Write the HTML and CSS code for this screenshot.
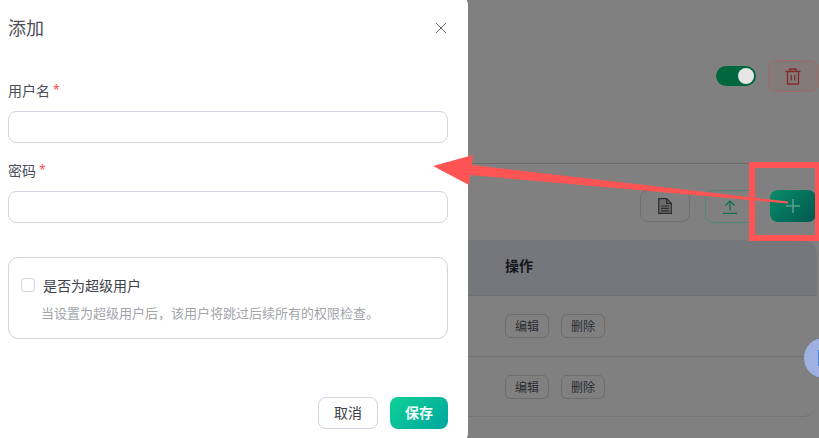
FILE: index.html
```html
<!DOCTYPE html>
<html lang="zh-CN">
<head>
    <meta charset="UTF-8">
    <meta name="viewport" content="width=device-width, initial-scale=1.0">
    <title>添加用户</title>
    <link rel="stylesheet" href="styles.css">
</head>
<body>
    <div class="page">
        <!-- Dimmed page behind the drawer -->
        <main class="content">
            <div class="top-row">
                <span class="toggle"><span class="toggle-knob"></span></span>
                <button class="icon-button delete-all">
                    <svg width="16" height="17" viewBox="0 0 16 17" fill="none" stroke="#852a2a" stroke-width="1.3">
                        <path d="M0.500 3.500h15M5 3.500V1h6v2.500M2.500 3.500V16h11V3.500M6.300 7v5.500M9.700 7v5.500"/>
                    </svg>
                </button>
            </div>

            <div class="search-line"></div>

            <div class="action-row">
                <button class="icon-button doc-button">
                    <svg width="14" height="16" viewBox="0 0 14 16" fill="#6a6a6a" stroke="#2e2e2e" stroke-width="1.200">
                        <path d="M0.700 0.700h8l4.600 4.600v10H0.700z"/>
                        <path d="M8.700 0.700v4.600h4.600M3 8h8M3 10.300h8M3 12.800h8" fill="none"/>
                    </svg>
                </button>
                <button class="icon-button upload-button">
                    <svg width="14" height="14" viewBox="0 0 14 14" fill="none" stroke="#0b6e52" stroke-width="1.200">
                        <path d="M7 10.500V1M2.500 5.500L7 1l4.500 4.500M0 13.300h14"/>
                    </svg>
                </button>
                <button class="icon-button add-button">
                    <svg width="14" height="14" viewBox="0 0 14 14" fill="none" stroke="#5f9f8d" stroke-width="1.500">
                        <path d="M7 0v14M0 7h14"/>
                    </svg>
                </button>
            </div>

            <div class="table">
                <div class="table-head">操作</div>
                <div class="table-row">
                    <button class="row-button">编辑</button>
                    <button class="row-button">删除</button>
                </div>
                <div class="table-row">
                    <button class="row-button">编辑</button>
                    <button class="row-button">删除</button>
                </div>
            </div>
        </main>

        <div class="help-bubble"><span class="help-dot"></span></div>

        <!-- Drawer -->
        <aside class="drawer">
            <div class="drawer-header">
                <h2 class="drawer-title">添加</h2>
                <svg class="close-icon" width="12" height="12" viewBox="0 0 12 12" fill="none" stroke="#666a70" stroke-width="1">
                    <path d="M1 1l10 10M11 1L1 11"/>
                </svg>
            </div>

            <div class="field">
                <label class="field-label">用户名 <span class="required">*</span></label>
                <input class="text-input" type="text">
            </div>

            <div class="field">
                <label class="field-label">密码 <span class="required">*</span></label>
                <input class="text-input" type="password">
            </div>

            <div class="super-card">
                <div class="check-row">
                    <span class="checkbox"></span>
                    <span class="check-label">是否为超级用户</span>
                </div>
                <p class="check-help">当设置为超级用户后&#xFF0C;该用户将跳过后续所有的权限检查。</p>
            </div>

            <div class="drawer-footer">
                <button class="btn btn-cancel">取消</button>
                <button class="btn btn-save">保存</button>
            </div>
        </aside>

        <!-- Red annotation drawn on top of the screenshot -->
        <svg class="annotation" width="819" height="438" viewBox="0 0 819 438">
            <rect x="752" y="165" width="66" height="73" fill="none" stroke="#ff5454" stroke-width="6"/>
            <path d="M433 166L473 155L472 165L788 201.500V203.500L470 175L469 185Z" fill="#ff5454"/>
        </svg>
    </div>
</body>
</html>
```

FILE: styles.css
```css
* {
    box-sizing: border-box;
}

html, body {
    margin: 0;
    height: 100%;
}

body {
    font-family: "Noto Sans CJK SC", "Liberation Sans", sans-serif;
    overflow: hidden;
}

button {
    font-family: inherit;
    padding: 0;
}

.page {
    position: relative;
    width: 819px;
    height: 438px;
    overflow: hidden;
    background-color: #808080;
}

/* Background page */
.content {
    display: flex;
    flex-direction: column;
    margin-left: 468px;
    padding-top: 60px;
}

.top-row {
    display: flex;
    align-items: center;
    justify-content: flex-end;
    gap: 12px;
    height: 32px;
    padding-right: 1px;
}

.toggle {
    display: flex;
    align-items: center;
    justify-content: flex-end;
    width: 40px;
    height: 20px;
    padding-right: 2px;
    background-color: #02663f;
    border-radius: 10px;
}

.toggle-knob {
    width: 16px;
    height: 16px;
    background-color: #e6e6e6;
    border-radius: 50%;
}

.icon-button {
    display: flex;
    align-items: center;
    justify-content: center;
    height: 32px;
    background: transparent;
    border: 1px solid #6f6f6f;
    border-radius: 8px;
}

.delete-all {
    width: 50px;
    background-color: #857a7a;
    border-color: #a06a6a;
}

.search-line {
    height: 1px;
    margin-top: 71px;
    margin-right: 60px;
    background-color: #6c6c6c;
}

.action-row {
    display: flex;
    align-items: flex-start;
    justify-content: flex-end;
    gap: 15px;
    height: 33px;
    margin-top: 26px;
    padding-right: 3px;
}

.doc-button {
    width: 50px;
}

.upload-button {
    width: 50px;
    height: 33px;
    border-color: #4f8a78;
}

.add-button {
    width: 46px;
    background: linear-gradient(135deg, #078d69, #01574f);
    border: none;
}

.table {
    height: 177px;
    margin-top: 17px;
    margin-right: 2px;
    border-bottom: 1px solid #747474;
    border-radius: 0 14px 14px 0;
}

.table-head {
    display: flex;
    align-items: center;
    height: 56px;
    padding: 0 0 5px 37px;
    font-size: 14px;
    font-weight: 700;
    color: #14161a;
    background-color: #75777a;
    border-bottom: 1px solid #6f6f78;
    border-radius: 0 14px 0 0;
}

.table-row {
    display: flex;
    align-items: center;
    gap: 12px;
    height: 61px;
    padding-left: 37px;
    border-bottom: 1px solid #72727a;
}

.table-row:last-child {
    height: 60px;
    border-bottom: none;
}

.row-button {
    width: 44px;
    height: 24px;
    padding-bottom: 2px;
    font-size: 12px;
    color: #2d2d33;
    background: transparent;
    border: 1px solid #6c6c6c;
    border-radius: 6px;
}

.help-bubble {
    position: absolute;
    left: 804px;
    top: 338px;
    display: flex;
    align-items: center;
    width: 40px;
    height: 40px;
    padding-left: 14px;
    background-color: #9fb1e3;
    border-radius: 50%;
}

.help-dot {
    width: 6px;
    height: 16px;
    background-color: #4f86d8;
}

/* Drawer */
.drawer {
    position: absolute;
    left: 0;
    top: -10px;
    display: flex;
    flex-direction: column;
    width: 468px;
    height: 458px;
    padding: 10px 20px 0 8px;
    background-color: #fff;
    border-radius: 0 16px 16px 0;
}

.drawer-header {
    display: flex;
    align-items: center;
    justify-content: space-between;
    flex: none;
    height: 56px;
    margin-bottom: 7px;
    padding-right: 1px;
}

.drawer-title {
    margin: 0 0 2px;
    font-size: 18px;
    font-weight: 400;
    color: #4a4e57;
}

.close-icon {
    flex: none;
}

.field {
    display: flex;
    flex-direction: column;
    flex: none;
    padding-top: 17px;
}

.field-label {
    height: 31px;
    font-size: 14px;
    line-height: 21px;
    color: #4a4e57;
}

.required {
    font-family: "Liberation Sans", sans-serif;
    font-size: 16px;
    line-height: 16px;
    color: #ff5050;
}

.text-input {
    flex: none;
    width: 440px;
    height: 32px;
    padding: 0 10px;
    background-color: #fff;
    border: 1px solid #d3d4e0;
    border-radius: 8px;
    outline: none;
}

.super-card {
    flex: none;
    width: 440px;
    height: 82px;
    margin-top: 34px;
    padding: 17px 12px 0;
    border: 1px solid #d3d4e0;
    border-radius: 10px;
}

.check-row {
    display: flex;
    align-items: center;
    gap: 8px;
    height: 20px;
}

.checkbox {
    width: 14px;
    height: 14px;
    background-color: #fff;
    border: 1px solid #d3d4e0;
    border-radius: 3px;
}

.check-label {
    font-size: 14px;
    color: #3d4149;
}

.check-help {
    margin: 8px 0 0 20px;
    font-size: 13px;
    line-height: 20px;
    color: #a3a5aa;
    white-space: nowrap;
}

.drawer-footer {
    display: flex;
    justify-content: flex-end;
    gap: 12px;
    margin-top: 58px;
}

.btn {
    height: 32px;
    padding-bottom: 2px;
    font-size: 14px;
    border-radius: 8px;
}

.btn-cancel {
    width: 60px;
    color: #3d4149;
    background-color: #fff;
    border: 1px solid #d3d4e0;
}

.btn-save {
    width: 58px;
    font-weight: 700;
    color: #f2fbf8;
    background: linear-gradient(135deg, #10d194, #00a6a0);
    border: none;
}

.annotation {
    position: absolute;
    left: 0;
    top: 0;
    pointer-events: none;
}
```
